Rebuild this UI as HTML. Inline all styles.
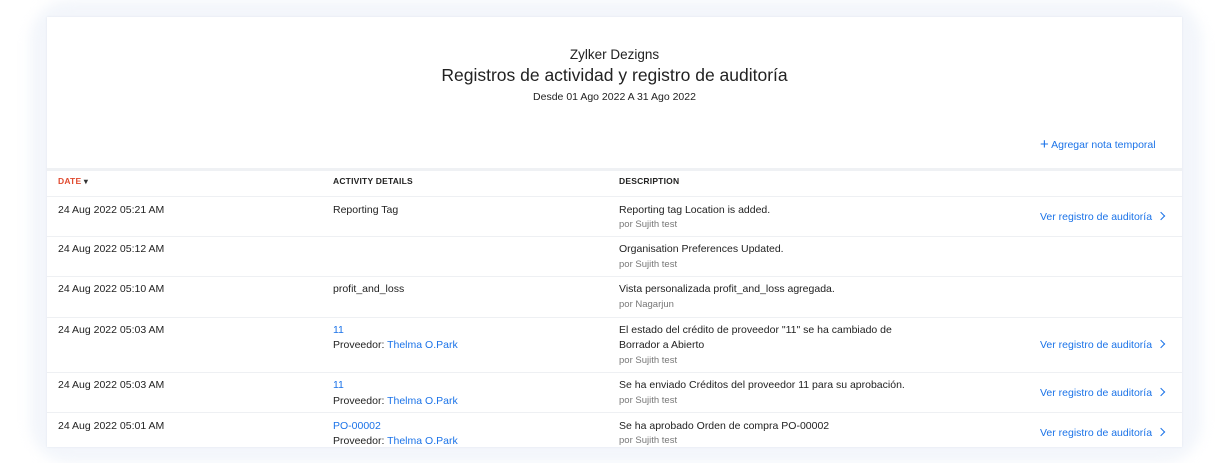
<!DOCTYPE html>
<html><head><style>
*{margin:0;padding:0;box-sizing:border-box}
body{width:1231px;height:463px;background:#fff;font-family:"Liberation Sans",sans-serif;color:#222;position:relative;overflow:hidden}
.glow{position:absolute;left:30px;top:0;width:1172px;height:463px;border-radius:40px;background:#f3f6fb;filter:blur(6px)}
.card{position:absolute;left:47px;top:17px;width:1135px;height:430px;background:#fff;box-shadow:0 0 2px #dfe4ee}
.t{position:absolute;left:0;width:100%;text-align:center}
.a{position:absolute;font-size:10.5px;white-space:nowrap}
.blue{color:#1b73e8}
.g{color:#777;font-size:9.5px}
.hl{position:absolute;left:0;width:100%;height:1px;background:#eef0f3}
.h{font-size:8.5px;font-weight:bold;letter-spacing:.2px}
.chev{display:inline-block;width:6px;height:6px;border-right:1.5px solid #1b73e8;border-top:1.5px solid #1b73e8;transform:rotate(45deg);margin-left:6px;position:relative;top:-1px}
</style></head><body>
<div class="glow"></div>
<div class="card">
<div class="t" style="top:30px;font-size:13.5px">Zylker Dezigns</div>
<div class="t" style="top:48px;font-size:17.5px">Registros de actividad y registro de auditoría</div>
<div class="t" style="top:74px;font-size:10.5px">Desde 01 Ago 2022 A 31 Ago 2022</div>
<div class="a blue" style="left:993px;top:118px"><span style="font-size:15px;position:relative;top:1px">+</span> Agregar nota temporal</div>
<div class="hl" style="top:151px;height:3px;background:#eff1f4"></div>
<div class="a h" style="left:11px;top:159px;color:#e04a2f">DATE <span style="color:#333;font-size:8px">▾</span></div>
<div class="a h" style="left:286px;top:159px">ACTIVITY DETAILS</div>
<div class="a h" style="left:572px;top:159px">DESCRIPTION</div>
<div class="hl" style="top:179px"></div>

<div class="a" style="left:11px;top:187px">24 Aug 2022 05:21 AM</div>
<div class="a" style="left:286px;top:187px">Reporting Tag</div>
<div class="a" style="left:572px;top:187px">Reporting tag Location is added.</div>
<div class="a g" style="left:572px;top:202px">por Sujith test</div>
<div class="a blue" style="left:993px;top:194px">Ver registro de auditoría<span class="chev"></span></div>
<div class="hl" style="top:219px"></div>

<div class="a" style="left:11px;top:226px">24 Aug 2022 05:12 AM</div>
<div class="a" style="left:572px;top:226px">Organisation Preferences Updated.</div>
<div class="a g" style="left:572px;top:242px">por Sujith test</div>
<div class="hl" style="top:259px"></div>

<div class="a" style="left:11px;top:266px">24 Aug 2022 05:10 AM</div>
<div class="a" style="left:286px;top:266px">profit_and_loss</div>
<div class="a" style="left:572px;top:266px">Vista personalizada profit_and_loss agregada.</div>
<div class="a g" style="left:572px;top:282px">por Nagarjun</div>
<div class="hl" style="top:300px"></div>

<div class="a" style="left:11px;top:307px">24 Aug 2022 05:03 AM</div>
<div class="a blue" style="left:286px;top:307px">11</div>
<div class="a" style="left:286px;top:322px">Proveedor: <span class="blue">Thelma O.Park</span></div>
<div class="a" style="left:572px;top:307px">El estado del crédito de proveedor "11" se ha cambiado de</div>
<div class="a" style="left:572px;top:322px">Borrador a Abierto</div>
<div class="a g" style="left:572px;top:338px">por Sujith test</div>
<div class="a blue" style="left:993px;top:322px">Ver registro de auditoría<span class="chev"></span></div>
<div class="hl" style="top:355px"></div>

<div class="a" style="left:11px;top:362px">24 Aug 2022 05:03 AM</div>
<div class="a blue" style="left:286px;top:362px">11</div>
<div class="a" style="left:286px;top:378px">Proveedor: <span class="blue">Thelma O.Park</span></div>
<div class="a" style="left:572px;top:362px">Se ha enviado Créditos del proveedor 11 para su aprobación.</div>
<div class="a g" style="left:572px;top:378px">por Sujith test</div>
<div class="a blue" style="left:993px;top:370px">Ver registro de auditoría<span class="chev"></span></div>
<div class="hl" style="top:395px"></div>

<div class="a" style="left:11px;top:403px">24 Aug 2022 05:01 AM</div>
<div class="a blue" style="left:286px;top:403px">PO-00002</div>
<div class="a" style="left:286px;top:418px">Proveedor: <span class="blue">Thelma O.Park</span></div>
<div class="a" style="left:572px;top:403px">Se ha aprobado Orden de compra PO-00002</div>
<div class="a g" style="left:572px;top:418px">por Sujith test</div>
<div class="a blue" style="left:993px;top:410px">Ver registro de auditoría<span class="chev"></span></div>
</div>
</body></html>
